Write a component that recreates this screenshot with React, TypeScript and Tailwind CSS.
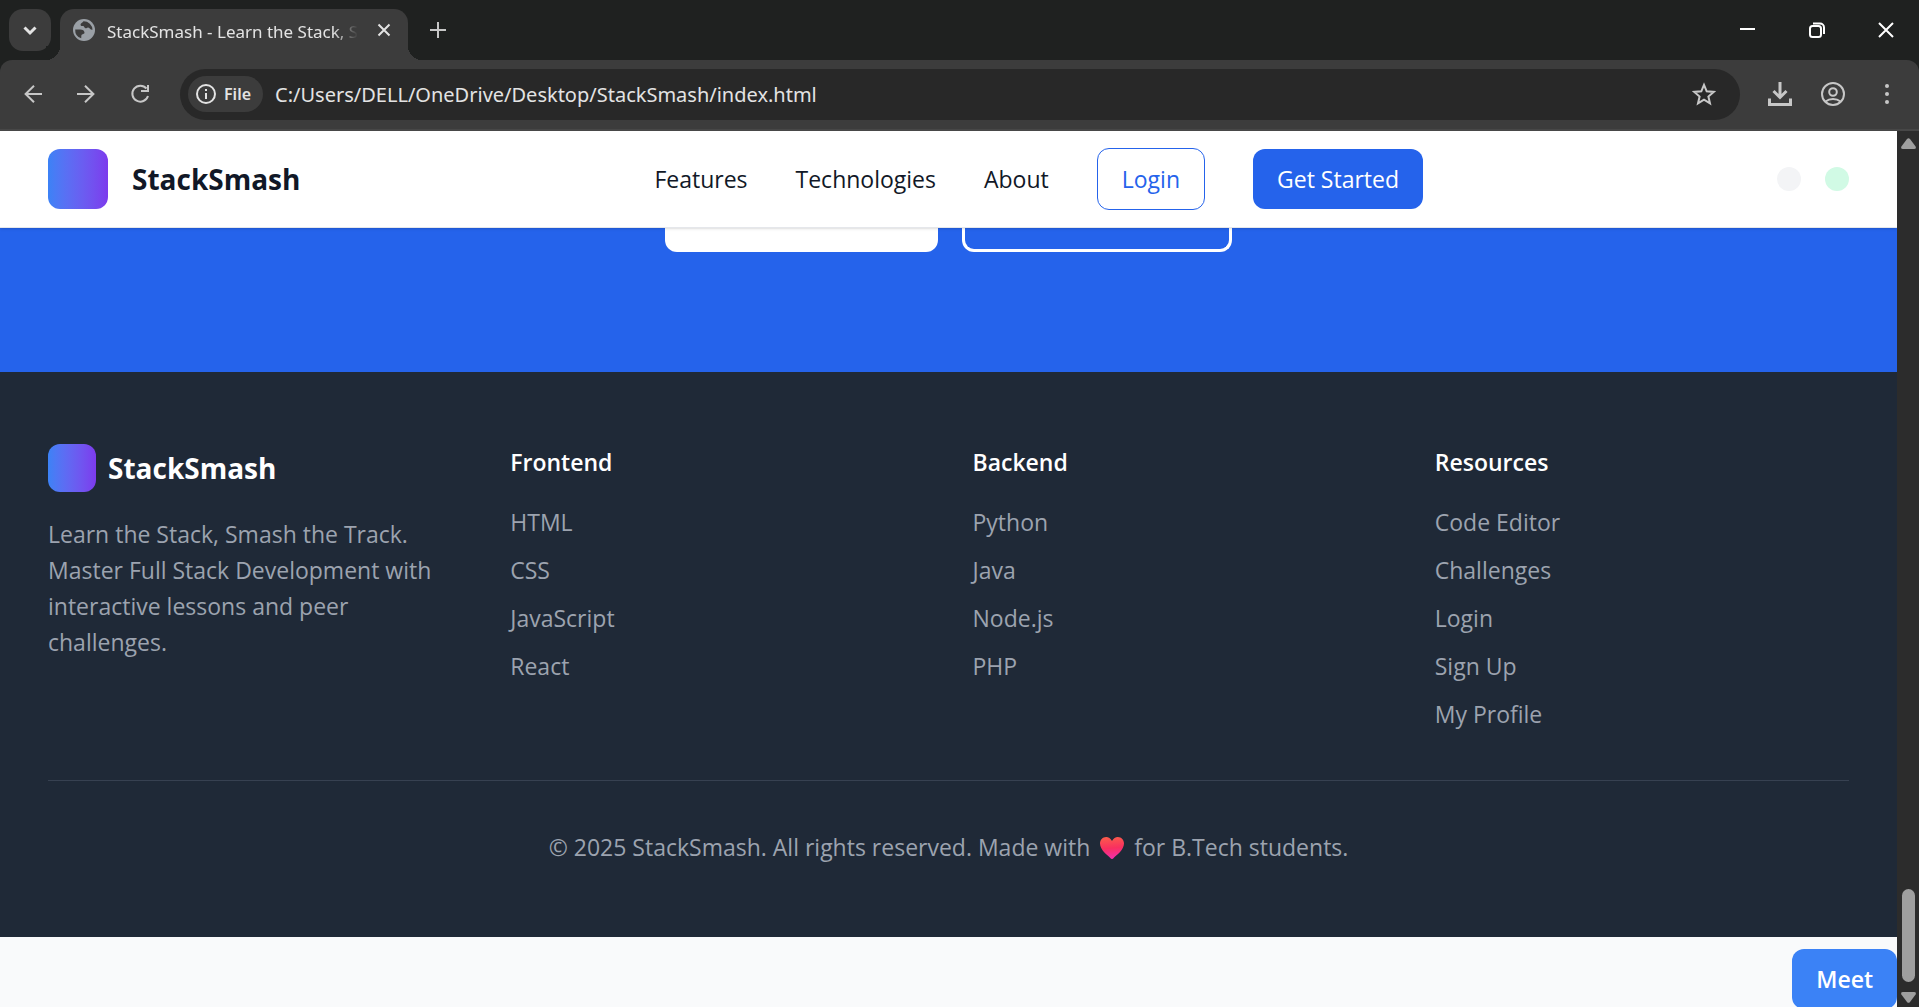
import type { ReactNode } from "react";

const footerColumns = [
  { title: "Frontend", links: ["HTML", "CSS", "JavaScript", "React"] },
  { title: "Backend", links: ["Python", "Java", "Node.js", "PHP"] },
  { title: "Resources", links: ["Code Editor", "Challenges", "Login", "Sign Up", "My Profile"] },
];

function Stroke({ size, width = 2, children }: { size: number; width?: number; children: ReactNode }) {
  return (
    <svg width={size} height={size} viewBox={`0 0 ${size} ${size}`} fill="none" stroke="currentColor" strokeWidth={width} aria-hidden="true">
      {children}
    </svg>
  );
}

function Globe() {
  return (
    <svg width="22" height="22" viewBox="0 0 22 22" className="shrink-0" aria-hidden="true">
      <circle cx="11" cy="11" r="11" fill="#9aa0a6" />
      <path fill="#3c3c3c" d="M10.500 2.200c-1 1.500-3 2-3 3.500 0 1.300 1.500 1.300 2.500 1.300 1.500 0 1 2 2.500 2.300 1.200.2 1.500-1 2.700-.8 1.800.3 1.800 2.500 4.300 2.300A8.800 8.800 0 0 0 10.500 2.200Z" />
      <path fill="#3c3c3c" d="M2.200 10.500h5c2.600 0 4.300 1.200 4.300 3.300 0 1.200-1.500 1.200-2.500 1.700s-.5 2.500-.8 3.800A8.800 8.800 0 0 1 2.200 10.500Z" />
    </svg>
  );
}

function TabStrip() {
  return (
    <div className="flex h-[60px] items-stretch bg-[#1f2120]">
      <button aria-label="Search tabs" className="mt-[9px] ml-[9px] flex size-[42px] items-center justify-center rounded-[14px] bg-[#3c3c3c] text-[#e3e3e3]">
        <Stroke size={14} width={3}><path d="M1.500 4.500 7 10l5.500-5.500" /></Stroke>
      </button>
      <div className="relative mt-[9px] ml-[9px] flex w-[348px] items-center rounded-t-[14px] bg-[#3c3c3c] pr-[17px] pb-[9px] pl-[13px]">
        <span className="absolute bottom-0 -left-[14px] size-[14px] bg-[radial-gradient(circle_at_0_0,#1f2120_14px,#3c3c3c_14px)]" />
        <span className="absolute -right-[14px] bottom-0 size-[14px] bg-[radial-gradient(circle_at_100%_0,#1f2120_14px,#3c3c3c_14px)]" />
        <Globe />
        <span className="mt-1 ml-3 text-[17px] whitespace-nowrap text-[#e3e3e3] [mask-image:linear-gradient(to_right,black_90%,transparent)]">
          StackSmash - Learn the Stack, S
        </span>
        <button aria-label="Close tab" className="ml-auto text-[#e3e3e3]">
          <Stroke size={14}><path d="m1.500 1.500 11 11M12.500 1.500l-11 11" /></Stroke>
        </button>
      </div>
      <button aria-label="New tab" className="ml-[22px] text-[#c7c7c7]">
        <Stroke size={16}><path d="M8 0v16M0 8h16" /></Stroke>
      </button>
      <div className="ml-auto flex items-center gap-[53px] pr-[25px] text-white">
        <button aria-label="Minimize"><Stroke size={16}><path d="M0 7h15" /></Stroke></button>
        <button aria-label="Restore">
          <Stroke size={16}><rect x="1" y="4" width="11" height="11" rx="2.500" /><path d="M4 1.500h7a4 4 0 0 1 4 4V12" /></Stroke>
        </button>
        <button aria-label="Close window"><Stroke size={16}><path d="m1 1 14 14M15 1 1 15" /></Stroke></button>
      </div>
    </div>
  );
}

function Toolbar() {
  return (
    <div className="bg-[#1f2120]">
      <div className="flex h-[71px] items-center rounded-t-[12px] border-b-2 border-[#474747] bg-[#3c3c3c] pr-[30px] pl-6 text-[#c7c7c7]">
        <div className="flex items-center gap-[35px]">
          <button aria-label="Back"><Stroke size={18}><path d="M18 9H2M10 .8 1.600 9 10 17.200" /></Stroke></button>
          <button aria-label="Forward"><Stroke size={18}><path d="M0 9h16M8 .8 16.400 9 8 17.200" /></Stroke></button>
          <button aria-label="Reload">
            <Stroke size={20}><path d="M16.500 4.500A8 8 0 1 0 18 12M18 1v6h-7" /></Stroke>
          </button>
        </div>
        <div className="ml-[30px] flex h-[51px] grow items-center rounded-full bg-[#282828] pr-[24px] pl-2">
          <button className="flex h-9 items-center gap-2 rounded-full bg-[#3c3c3c] pr-3 pl-2 text-[16px] font-semibold text-[#e3e3e3]">
            <Stroke size={20}><circle cx="10" cy="10" r="9" /><path d="M10 9v6M10 5v2" /></Stroke>
            File
          </button>
          <input aria-label="Address" defaultValue="C:/Users/DELL/OneDrive/Desktop/StackSmash/index.html" className="ml-3 h-9 min-w-0 grow bg-transparent text-[20px] text-[#e3e3e3] outline-none" />
          <button aria-label="Bookmark">
            <Stroke size={24}><path d="m12 2.800 2.700 6.500 7 .6-5.300 4.600 1.600 6.900-6-3.700-6 3.700 1.600-6.900L2.300 9.900l7-.6z" /></Stroke>
          </button>
        </div>
        <div className="ml-7 flex items-center gap-[29px]">
          <button aria-label="Downloads">
            <Stroke size={24} width={3}><path d="M12 0v15M5.500 9l6.500 6.500L18.500 9M1.500 16.500v6h21v-6" /></Stroke>
          </button>
          <button aria-label="Profile">
            <Stroke size={24}><circle cx="12" cy="12" r="11" /><circle cx="12" cy="10" r="3.800" /><path d="M4.500 19.500c4.200-3.500 10.800-3.500 15 0" /></Stroke>
          </button>
          <button aria-label="Menu" className="ml-[11px] flex flex-col gap-1">
            <span className="size-1 rounded-full bg-current" />
            <span className="size-1 rounded-full bg-current" />
            <span className="size-1 rounded-full bg-current" />
          </button>
        </div>
      </div>
    </div>
  );
}

function Heart() {
  return (
    <svg role="img" aria-label="love" viewBox="0 0 24 22" className="mx-1 inline-block h-[22px] w-6 align-[-3px]">
      <defs>
        <linearGradient id="heart" x1="0.500" y1="0" x2="0.600" y2="1">
          <stop offset="0" stopColor="#fb5a4b" />
          <stop offset="0.500" stopColor="#f92f60" />
          <stop offset="1" stopColor="#f030b0" />
        </linearGradient>
      </defs>
      <path fill="url(#heart)" d="M12 4C10.500 1.300 8.500 0 6.200 0 2.700 0 0 2.900 0 6.500c0 6.500 7.500 11.500 10.800 15 .7.700 1.700.700 2.400 0C16.500 18 24 13 24 6.500 24 2.900 21.300 0 17.800 0 15.500 0 13.500 1.300 12 4Z" />
    </svg>
  );
}

function Footer() {
  return (
    <footer className="bg-[#1f2937] px-12 py-[72px] text-[#9ca3af]">
      <div className="grid grid-cols-4 gap-12 pb-12">
        <div>
          <div className="mb-6 flex items-center gap-3">
            <span className="size-12 rounded-xl bg-linear-to-r from-[#3b82f6] to-[#7c3aed]" />
            <span className="text-[28px] leading-9 font-bold text-white">StackSmash</span>
          </div>
          <p>Learn the Stack, Smash the Track. Master Full Stack Development with interactive lessons and peer challenges.</p>
        </div>
        {footerColumns.map((column) => (
          <div key={column.title}>
            <h4 className="mb-6 font-semibold text-white">{column.title}</h4>
            <ul className="flex flex-col gap-3">
              {column.links.map((link) => (
                <li key={link}><a href="#">{link}</a></li>
              ))}
            </ul>
          </div>
        ))}
      </div>
      <p className="border-t border-[#374151] pt-12 text-center">
        © 2025 StackSmash. All rights reserved. Made with <Heart /> for B.Tech students.
      </p>
    </footer>
  );
}

function Page() {
  return (
    <main className="flex min-w-0 grow flex-col overflow-hidden bg-[#f9fafb] font-['Open_Sans',sans-serif] text-[23px] leading-9">
      <nav className="z-10 flex h-[97px] shrink-0 items-center justify-between border-b border-[#e5e7eb] bg-white px-12 text-[#111827] shadow-sm">
        <a href="#" className="flex items-center gap-6">
          <span className="size-[60px] rounded-xl bg-linear-to-r from-[#3b82f6] to-[#7c3aed]" />
          <span className="text-[28px] font-bold">StackSmash</span>
        </a>
        <div className="flex items-center gap-12">
          <a href="#">Features</a>
          <a href="#">Technologies</a>
          <a href="#">About</a>
          <button className="rounded-xl border border-[#2563eb] px-6 py-3 text-[#2563eb]">Login</button>
          <button className="rounded-xl bg-[#2563eb] px-6 py-3 font-medium text-white">Get Started</button>
        </div>
        <div className="flex gap-6">
          <span className="size-6 rounded-full bg-[#f3f4f6]" />
          <span className="size-6 rounded-full bg-[#d1fae5]" />
        </div>
      </nav>
      <section className="flex justify-center gap-6 bg-[#2563eb] pb-[120px]">
        <span className="h-6 w-[273px] rounded-b-xl bg-white" />
        <span className="h-6 w-[270px] rounded-b-xl border-[3px] border-t-0 border-white" />
      </section>
      <Footer />
      <div className="flex justify-end pt-3">
        <button className="rounded-xl bg-[#3b82f6] px-6 py-3 font-semibold text-white">Meet</button>
      </div>
    </main>
  );
}

function ScrollBar() {
  return (
    <div className="flex w-[22px] shrink-0 flex-col items-center bg-[#2c2c2c] pt-[7px] pb-1 text-[#9f9f9f]">
      <svg width="15" height="11" viewBox="0 0 15 11" fill="currentColor" aria-hidden="true"><path d="M6 1Q7.500-.7 9 1l5.600 7.500q1 2.500-1.600 2.500H2Q-.6 11 .4 8.500Z" /></svg>
      <span className="mt-auto mb-[10px] h-[93px] w-[13px] rounded-full bg-current" />
      <svg width="15" height="11" viewBox="0 0 15 11" fill="currentColor" aria-hidden="true"><path d="M6 10q1.500 1.700 3 0l5.600-7.500Q15.600 0 13 0H2Q-.6 0 .4 2.500Z" /></svg>
    </div>
  );
}

export default function App() {
  return (
    <div className="flex h-screen flex-col overflow-hidden font-['Noto_Sans',sans-serif]">
      <TabStrip />
      <Toolbar />
      <div className="flex min-h-0 grow">
        <Page />
        <ScrollBar />
      </div>
    </div>
  );
}
